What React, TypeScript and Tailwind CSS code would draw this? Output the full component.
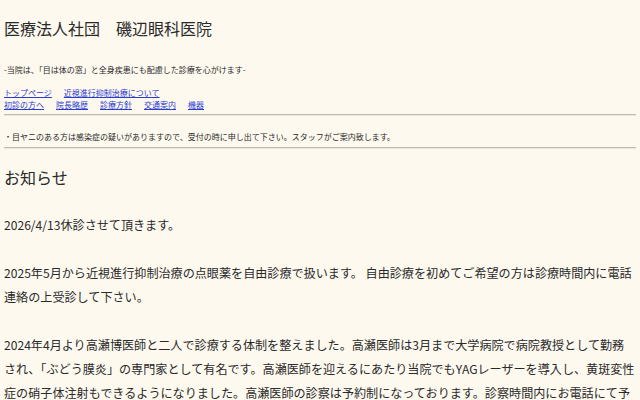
const FONT = "font-['Noto_Sans_CJK_JP','Noto_Sans',sans-serif]";

const topLinks = ["トップページ", "近視進行抑制治療について"];
const subLinks = ["初診の方へ", "院長略歴", "診療方針", "交通案内", "機器"];

const notices = [
  "2026/4/13休診させて頂きます。",
  "2025年5月から近視進行抑制治療の点眼薬を自由診療で扱います。 自由診療を初めてご希望の方は診療時間内に電話連絡の上受診して下さい。",
  "2024年4月より高瀬博医師と二人で診療する体制を整えました。高瀬医師は3月まで大学病院で病院教授として勤務され、「ぶどう膜炎」の専門家として有名です。高瀬医師を迎えるにあたり当院でもYAGレーザーを導入し、黄斑変性症の硝子体注射もできるようになりました。高瀬医師の診察は予約制になっております。診察時間内にお電話にて予約をお願いします。",
];

function Rule() {
  return <div className="border-t border-b border-t-[#bfbdb3] border-b-[#e9e7dd]" />;
}

export default function App() {
  return (
    <div className={`min-h-screen bg-[#fdf9ef] px-1 text-[#2a2a2a] ${FONT}`}>
      <h1 className="pt-[18px] text-[16px] leading-[20px] font-normal">
        医療法人社団　磯辺眼科医院
      </h1>

      <p className="mt-[27px] text-[8px] leading-[10px]">
        -当院は、「目は体の窓」と全身疾患にも配慮した診療を心がけます-
      </p>

      {/* ナビゲーション */}
      <nav className="mt-[12px] text-[8px] leading-[12px]">
        <div className="flex gap-[12px]">
          {topLinks.map((l) => (
            <a key={l} href="#" className="text-[#2b3bd0] underline">
              {l}
            </a>
          ))}
        </div>
        <div className="flex gap-[12px]">
          {subLinks.map((l) => (
            <a key={l} href="#" className="text-[#2b3bd0] underline">
              {l}
            </a>
          ))}
        </div>
      </nav>

      <div className="mt-[3px]">
        <Rule />
      </div>

      <p className="mt-[16px] text-[8px] leading-[10px]">
        ・目ヤニのある方は感染症の疑いがありますので、受付の時に申し出て下さい。スタッフがご案内致します。
      </p>

      <div className="mt-[5px]">
        <Rule />
      </div>

      <h2 className="mt-[18px] text-[16px] leading-[20px] font-normal">お知らせ</h2>

      <div className="mt-[26px] space-y-6 text-[12.1px] leading-[24px]">
        {notices.map((n) => (
          <p key={n.slice(0, 12)}>{n}</p>
        ))}
      </div>
    </div>
  );
}
